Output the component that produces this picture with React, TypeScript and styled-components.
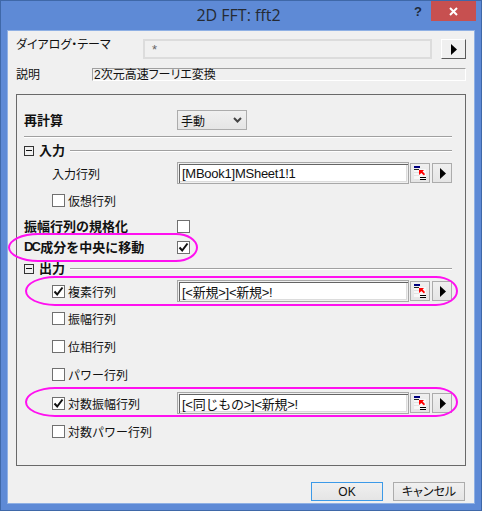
import React from 'react'
import styled, { createGlobalStyle } from 'styled-components'

const UI_FONT = `"Liberation Sans", "Noto Sans CJK JP", sans-serif`

const GlobalStyle = createGlobalStyle`
  html, body {
    margin: 0;
    padding: 0;
    background: #5e8ad6;
  }
  * {
    box-sizing: border-box;
  }
`

const Window = styled.div`
  width: 482px;
  height: 511px;
  overflow: hidden;
  display: flex;
  flex-direction: column;
  padding: 0 7px 7px;
  background: #5e8ad6;
  border: 1px solid #3f68a8;
  font-family: ${UI_FONT};
  font-size: 12px;
  color: #111;
`

const TitleBar = styled.div`
  height: 30px;
  margin: 0 -7px;
  padding-right: 5px;
  display: grid;
  grid-template-columns: 1fr auto 1fr;
  flex-shrink: 0;
`

const Title = styled.div`
  grid-column: 2;
  padding-top: 4px;
  font-family: "Open Sans", sans-serif;
  font-size: 16px;
  line-height: 20px;
  color: #252a33;
`

const Controls = styled.div`
  grid-column: 3;
  display: flex;
  justify-content: flex-end;
  align-items: flex-start;
`

const HelpMark = styled.span`
  margin: 0 9px 0 0;
  font-family: "Liberation Sans", sans-serif;
  font-size: 13px;
  font-weight: 700;
  line-height: 22px;
  color: #1f2a3a;
`

const CloseButton = styled.button`
  width: 45px;
  height: 20px;
  border: 0;
  padding: 0;
  display: flex;
  align-items: center;
  justify-content: center;
  background: #c75050;
`

const Client = styled.div`
  flex: 1;
  display: flex;
  flex-direction: column;
  padding: 8px 8px 0;
  background: #f0f0f0;
  box-shadow: 0 0 0 1px #8fb0e4;
`

const ThemeRow = styled.div`
  height: 20px;
  display: flex;
  align-items: center;
`

const TopLabel = styled.span<{ $width: number; $raise?: number }>`
  width: ${(p) => p.$width}px;
  margin-bottom: ${(p) => p.$raise ?? 0}px;
  flex-shrink: 0;
  line-height: 14px;
  white-space: nowrap;
  font-feature-settings: "palt";
`

const ThemeField = styled.div`
  width: 290px;
  height: 20px;
  padding-left: 7px;
  border: 2px solid #dcdcdc;
  font-size: 13px;
  line-height: 17px;
  color: #666;
  background: #f0f0f0;
`

const RaisedButton = styled.button`
  width: 25px;
  height: 20px;
  margin-left: 9px;
  padding: 0;
  display: flex;
  align-items: center;
  justify-content: center;
  background: #f0f0f0;
  border: 1px solid;
  border-color: #fff #5a5a5a #5a5a5a #fff;
`

const DescRow = styled.div`
  height: 13px;
  margin-top: 9px;
  display: flex;
  align-items: center;
`

const DescField = styled.div`
  flex: 1;
  height: 13px;
  padding-left: 1px;
  border: 1px solid;
  border-color: #a0a0a0 #fff #fff #a0a0a0;
  line-height: 12px;
  white-space: nowrap;
  font-feature-settings: "palt";
`

const GroupBox = styled.div`
  height: 372px;
  margin-top: 13px;
  padding: 15px 13px 0 7px;
  border: 1px solid #696969;
`

const Row = styled.div<{ $mt: number; $h: number; $indent?: boolean }>`
  position: relative;
  height: ${(p) => p.$h}px;
  margin-top: ${(p) => p.$mt}px;
  padding-left: ${(p) => (p.$indent ? 28 : 0)}px;
  display: flex;
  align-items: center;
`

const LabelCell = styled.div<{ $indent?: boolean; $bold?: boolean }>`
  width: ${(p) => (p.$indent ? 125 : 153)}px;
  flex-shrink: 0;
  display: flex;
  align-items: center;
  padding-bottom: ${(p) => (p.$bold ? 2 : 0)}px;
  white-space: nowrap;
  font-size: ${(p) => (p.$bold ? 13 : 12)}px;
  font-weight: ${(p) => (p.$bold ? 700 : 400)};
`

const NarrowLatin = styled.span`
  font-size: 13px;
  letter-spacing: -1.8px;
  margin-right: 1px;
`

const SelectBox = styled.div`
  width: 70px;
  height: 20px;
  padding: 0 4px 0 3px;
  display: flex;
  align-items: center;
  justify-content: space-between;
  border: 1px solid #acacac;
  background: linear-gradient(#f0f0f0, #e5e5e5);
`

const Divider = styled.div`
  height: 2px;
  margin-top: 6px;
  background: linear-gradient(#a0a0a0 50%, #fff 50%);
`

const SectionHead = styled.div<{ $mt: number }>`
  height: 14px;
  margin-top: ${(p) => p.$mt}px;
  display: flex;
  align-items: center;
`

const Collapse = styled.span`
  position: relative;
  width: 10px;
  height: 10px;
  flex-shrink: 0;
  border: 1px solid #333;
  background: #f0f0f0;

  &::after {
    content: '';
    position: absolute;
    left: 1px;
    right: 1px;
    top: 3px;
    height: 1px;
    background: #111;
  }
`

const SectionTitle = styled.span`
  margin: 0 0 3px 5px;
  font-size: 13px;
  font-weight: 700;
`

const SectionLine = styled.span`
  flex: 1;
  height: 2px;
  margin-left: 5px;
  background: linear-gradient(#a0a0a0 50%, #fff 50%);
`

const CheckBox = styled.span<{ $gap?: boolean }>`
  width: 13px;
  height: 13px;
  margin-right: ${(p) => (p.$gap ? 3 : 0)}px;
  flex-shrink: 0;
  display: flex;
  align-items: center;
  justify-content: center;
  border: 1px solid #707070;
  background: #fff;
`

const FieldInput = styled.input`
  width: 233px;
  height: 22px;
  padding: 1px 3px 0 4px;
  border: 1px solid #a8a8a8;
  outline: 0;
  font-family: ${UI_FONT};
  font-size: 13px;
  letter-spacing: -0.25px;
  color: #111;
  background: #fff;
  box-shadow: inset 1px 1px 0 #f0f0f0, inset 2px 2px 0 #646464,
    inset -1px -1px 0 #f0f0f0, inset -2px -2px 0 #dcdcdc;
`

const SquareButton = styled.button<{ $gap: number }>`
  width: 20px;
  height: 20px;
  margin-left: ${(p) => p.$gap}px;
  padding: 0;
  flex-shrink: 0;
  display: flex;
  align-items: center;
  justify-content: center;
  border: 1px solid #acacac;
  background: linear-gradient(#f0f0f0, #e5e5e5);
`

const Ring = styled.div<{ $left: number; $top: number; $w: number; $h: number }>`
  position: absolute;
  left: ${(p) => p.$left}px;
  top: ${(p) => p.$top}px;
  width: ${(p) => p.$w}px;
  height: ${(p) => p.$h}px;
  border: 2.5px solid #ff10f0;
  border-radius: 30px 22px 22px 30px / 50%;
  pointer-events: none;
`

const Footer = styled.div`
  margin-top: 16px;
  display: flex;
  justify-content: flex-end;
  gap: 10px;
  padding-right: 1px;
`

const DialogButton = styled.button<{ $primary?: boolean }>`
  width: 72px;
  height: 19px;
  padding: 0;
  font-family: ${UI_FONT};
  font-size: 12px;
  line-height: 16px;
  color: #111;
  font-feature-settings: "palt";
  border: 1px solid ${(p) => (p.$primary ? '#3c9ae8' : '#acacac')};
  background: linear-gradient(#f0f0f0, #e5e5e5);
`

const CloseIcon = () => (
  <svg width="9" height="9" viewBox="0 0 9 9">
    <path d="M1 1 L8 8 M8 1 L1 8" stroke="#fff" strokeWidth="2" />
  </svg>
)

const ArrowIcon = () => (
  <svg width="7" height="11" viewBox="0 0 7 11">
    <path d="M1 0 L7 5.5 L1 11 Z" fill="#000" />
  </svg>
)

const ChevronIcon = () => (
  <svg width="9" height="6" viewBox="0 0 9 6">
    <path d="M1 1 L4.5 4.5 L8 1" fill="none" stroke="#444" strokeWidth="2" />
  </svg>
)

const TickIcon = () => (
  <svg width="11" height="11" viewBox="0 0 11 11">
    <path d="M1.5 5.5 L4.2 8.5 L9.5 1.5" fill="none" stroke="#111" strokeWidth="2" />
  </svg>
)

const PickIcon = () => (
  <svg width="13" height="14" viewBox="0 0 13 14">
    <rect x="0" y="3" width="12" height="10" fill="#f7f7f7" />
    <rect x="0" y="0" width="6" height="2" fill="#000080" />
    <rect x="0" y="3" width="5" height="1" fill="#222" />
    <rect x="0" y="6" width="5" height="1" fill="#e2e2e2" />
    <rect x="0" y="9" width="5" height="1" fill="#e2e2e2" />
    <rect x="6" y="11" width="6" height="1" fill="#000" />
    <rect x="6" y="13" width="6" height="1" fill="#000" />
    <path d="M5 4 L10 4 L8.6 5.6 L11 8 L10 9.5 L7.4 7 L5 9 Z" fill="#f00" />
  </svg>
)

const RangeField: React.FC<{ value: string }> = ({ value }) => (
  <>
    <FieldInput readOnly value={value} />
    <SquareButton $gap={1}>
      <PickIcon />
    </SquareButton>
    <SquareButton $gap={2}>
      <ArrowIcon />
    </SquareButton>
  </>
)

const CheckLabel: React.FC<{ label: string; checked?: boolean }> = ({ label, checked }) => (
  <LabelCell $indent>
    <CheckBox $gap>{checked && <TickIcon />}</CheckBox>
    {label}
  </LabelCell>
)

const App: React.FC = () => {
  return (
    <>
      <GlobalStyle />
      <Window>
        <TitleBar>
          <Title>2D FFT: fft2</Title>
          <Controls>
            <HelpMark>?</HelpMark>
            <CloseButton>
              <CloseIcon />
            </CloseButton>
          </Controls>
        </TitleBar>
        <Client>
          <ThemeRow>
            <TopLabel $width={127} $raise={8}>ダイアログ・テーマ</TopLabel>
            <ThemeField>*</ThemeField>
            <RaisedButton>
              <ArrowIcon />
            </RaisedButton>
          </ThemeRow>
          <DescRow>
            <TopLabel $width={76}>説明</TopLabel>
            <DescField>2次元高速フーリエ変換</DescField>
          </DescRow>
          <GroupBox>
            <Row $mt={0} $h={20}>
              <LabelCell $bold>再計算</LabelCell>
              <SelectBox>
                手動
                <ChevronIcon />
              </SelectBox>
            </Row>
            <Divider />
            <SectionHead $mt={6}>
              <Collapse />
              <SectionTitle>入力</SectionTitle>
              <SectionLine />
            </SectionHead>
            <Row $mt={4} $h={22} $indent>
              <LabelCell $indent>入力行列</LabelCell>
              <RangeField value="[MBook1]MSheet1!1" />
            </Row>
            <Row $mt={5} $h={22} $indent>
              <CheckLabel label="仮想行列" />
            </Row>
            <Row $mt={5} $h={20}>
              <LabelCell $bold>振幅行列の規格化</LabelCell>
              <CheckBox />
            </Row>
            <Row $mt={1} $h={20}>
              <LabelCell $bold>
                <NarrowLatin>DC</NarrowLatin>成分を中央に移動
              </LabelCell>
              <CheckBox>
                <TickIcon />
              </CheckBox>
              <Ring $left={-16} $top={-4} $w={190} $h={29} />
            </Row>
            <SectionHead $mt={5}>
              <Collapse />
              <SectionTitle>出力</SectionTitle>
              <SectionLine />
            </SectionHead>
            <Row $mt={4} $h={22} $indent>
              <CheckLabel label="複素行列" checked />
              <RangeField value="[<新規>]<新規>!" />
              <Ring $left={1} $top={-4} $w={433} $h={30} />
            </Row>
            <Row $mt={5} $h={22} $indent>
              <CheckLabel label="振幅行列" />
            </Row>
            <Row $mt={6} $h={22} $indent>
              <CheckLabel label="位相行列" />
            </Row>
            <Row $mt={6} $h={22} $indent>
              <CheckLabel label="パワー行列" />
            </Row>
            <Row $mt={7} $h={22} $indent>
              <CheckLabel label="対数振幅行列" checked />
              <RangeField value="[<同じもの>]<新規>!" />
              <Ring $left={1} $top={-5} $w={433} $h={30} />
            </Row>
            <Row $mt={6} $h={22} $indent>
              <CheckLabel label="対数パワー行列" />
            </Row>
          </GroupBox>
          <Footer>
            <DialogButton $primary>OK</DialogButton>
            <DialogButton>キャンセル</DialogButton>
          </Footer>
        </Client>
      </Window>
    </>
  )
}

export default App
